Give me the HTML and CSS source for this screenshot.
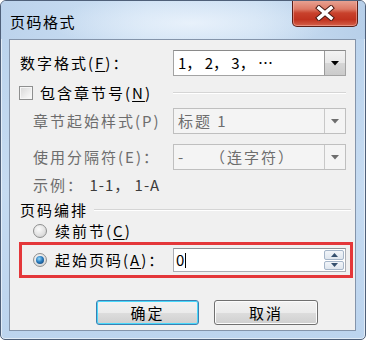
FILE: index.html
```html
<!DOCTYPE html>
<html lang="zh-CN">
<head>
  <meta charset="UTF-8">
  <title>页码格式</title>
  <link rel="stylesheet" href="styles.css">
</head>
<body>

  <div class="window">
    <div class="titlebar">
      <span class="title">页码格式</span>
      <button class="close">
        <svg width="22" height="16" viewBox="0 0 22 16">
          <path d="M5 3 L17 13 M17 3 L5 13" stroke="#4a1a14" stroke-width="5.5" stroke-linecap="square"/>
          <path d="M5 3 L17 13 M17 3 L5 13" stroke="#fff" stroke-width="3.5" stroke-linecap="square"/>
        </svg>
      </button>
    </div>

    <div class="client">
      <div class="row">
        <label class="label">数字格式(<u>F</u>)：</label>
        <div class="combo">
          <span class="combo-text num">1，&nbsp;2，&nbsp;3，&nbsp;…</span>
          <span class="drop">
            <svg width="8" height="5" viewBox="0 0 8 5"><path d="M0 0 H8 L4 4.5 Z" fill="#000"/></svg>
          </span>
        </div>
      </div>

      <div class="row check-row">
        <label class="label"><span class="checkbox"></span>包含章节号(<u>N</u>)</label>
        <span class="rule"></span>
      </div>

      <div class="row row-3">
        <label class="label sub disabled">章节起始样式(P)</label>
        <div class="combo off">
          <span class="combo-text">标题 1</span>
          <span class="drop">
            <svg width="8" height="5" viewBox="0 0 8 5"><path d="M0 0 H8 L4 4.5 Z" fill="#6d6d6d"/></svg>
          </span>
        </div>
      </div>

      <div class="row row-4">
        <label class="label sub disabled">使用分隔符(E)：</label>
        <div class="combo off">
          <span class="combo-text"><span class="dash">-</span>（连字符）</span>
          <span class="drop">
            <svg width="8" height="5" viewBox="0 0 8 5"><path d="M0 0 H8 L4 4.5 Z" fill="#6d6d6d"/></svg>
          </span>
        </div>
      </div>

      <div class="row text-row">
        <span class="sub disabled">示例：&nbsp;<span class="sample">1-1，&nbsp;1-A</span></span>
      </div>

      <div class="row group-row">
        <span>页码编排</span>
        <span class="rule grow"></span>
      </div>

      <div class="row radio-row">
        <span class="radio"></span>
        <span class="radio-text">续前节(<u>C</u>)</span>
      </div>

      <div class="highlight">
        <div class="radio-cell">
          <span class="radio on"></span>
          <span class="radio-text">起始页码(<u>A</u>)：</span>
        </div>
        <div class="spin">
          <span class="spin-text">0<span class="caret"></span></span>
          <span class="spin-btns">
            <span class="spin-btn"><svg width="7" height="4" viewBox="0 0 7 4"><path d="M0 4 H7 L3.5 0 Z" fill="#35506e"/></svg></span>
            <span class="spin-btn"><svg width="7" height="4" viewBox="0 0 7 4"><path d="M0 0 H7 L3.5 4 Z" fill="#35506e"/></svg></span>
          </span>
        </div>
      </div>

      <div class="buttons">
        <button class="btn default">确定</button>
        <button class="btn">取消</button>
      </div>
    </div>
  </div>

</body>
</html>
```

FILE: styles.css
```css
body {
  margin: 0;
  background: #fff;
}
.window {
  width: 366px;
  height: 340px;
  box-sizing: border-box;
  border: 1px solid #4f6079;
  border-radius: 6px 6px 5px 5px;
  background: linear-gradient(180deg, #b9d2ec 0%, #c6dbf1 55%, #bcd4ee 100%);
  box-shadow: inset 0 0 0 1px rgba(255, 255, 255, 0.55);
  font-family: "Noto Sans CJK SC", sans-serif;
  overflow: hidden;
}
.titlebar {
  height: 38px;
  display: flex;
  background:
    radial-gradient(ellipse 140px 30px at 190px 22px, rgba(235, 243, 252, 0.9), rgba(235, 243, 252, 0)),
    linear-gradient(90deg, #bcd3ec 0%, #cde0f3 40%, #cadef2 70%, #b7cfe9 100%);
}
.title {
  padding: 11px 0 0 9px;
  font-size: 15px;
  letter-spacing: 1.5px;
  line-height: 20px;
  color: #000;
}
.close {
  margin: -1px 7px 0 auto;
  width: 66px;
  height: 27px;
  padding: 0;
  border: 1px solid #5d1e16;
  border-top: none;
  border-radius: 0 0 5px 5px;
  background: linear-gradient(180deg, #e9a697 0%, #dd7a66 35%, #c8412c 50%, #c0321f 75%, #d4614a 100%);
  box-shadow: inset 0 0 0 1px rgba(255, 200, 190, 0.45);
  display: flex;
  align-items: center;
  justify-content: center;
}
.client {
  margin: 0 9px 0 8px;
  height: 292px;
  box-sizing: border-box;
  border: 1px solid #8494aa;
  background: #f0f0f0;
  padding: 10px 9px 0 10px;
  display: flex;
  flex-direction: column;
  font-size: 15px;
  letter-spacing: 2px;
  line-height: 20px;
  color: #000;
}
.row {
  display: flex;
  align-items: center;
  height: 26px;
  flex: none;
}
.label {
  width: 153px;
  flex: none;
  white-space: nowrap;
  display: flex;
  align-items: center;
}
.sub {
  padding-left: 13px;
  box-sizing: border-box;
}
.disabled {
  color: #6d6d6d;
}
.combo {
  width: 173px;
  height: 26px;
  box-sizing: border-box;
  border: 1px solid #a3a3a3;
  border-top-color: #8a8a8a;
  background: #fff;
  display: flex;
  align-items: center;
  flex: none;
}
.combo-text {
  flex: 1;
  padding-left: 4px;
  white-space: nowrap;
}
.num {
  letter-spacing: 0;
}
.drop {
  width: 21px;
  height: 24px;
  box-sizing: border-box;
  border-left: 1px solid #9a9a9a;
  background: linear-gradient(180deg, #f3f3f3 0%, #e8e8e8 50%, #d6d6d6 51%, #cbcbcb 100%);
  display: flex;
  align-items: center;
  justify-content: center;
}
.combo.off {
  border-color: #bfbfbf;
  background: #f4f4f4;
  color: #6d6d6d;
}
.combo.off .drop {
  background: #f4f4f4;
  border-left-color: #c8c8c8;
}
.dash {
  display: inline-block;
  width: 32px;
}
.check-row {
  height: 24px;
  margin-top: 5px;
}
.checkbox {
  width: 14px;
  height: 14px;
  box-sizing: border-box;
  margin: 0 7px 0 -1px;
  border: 1px solid #8e8f8f;
  background: linear-gradient(135deg, #d6d6d6 0%, #f2f2f2 70%, #fbfbfb 100%);
  box-shadow: inset 0 0 0 1px #f6f6f6;
}
.rule {
  width: 177px;
  height: 1px;
  background: #d5d5d5;
  border-bottom: 1px solid #fff;
}
.rule.grow {
  width: auto;
  flex: 1;
  margin: 0 -5px 0 6px;
}
.row-3 {
  margin-top: 3px;
}
.row-4 {
  margin-top: 10px;
}
.text-row {
  height: 20px;
  margin-top: 5px;
}
.sample {
  color: #3c3c3c;
  letter-spacing: 1px;
}
.group-row {
  height: 20px;
  margin-top: 5px;
}
.radio-row {
  height: 18px;
  margin-top: 2px;
  padding-left: 13px;
}
.radio {
  width: 14px;
  height: 14px;
  box-sizing: border-box;
  border-radius: 50%;
  border: 1px solid #8e8f8f;
  background: radial-gradient(circle at 40% 35%, #fbfbfb 0%, #e2e2e2 55%, #c8c8c8 100%);
  flex: none;
  position: relative;
}
.radio.on::after {
  content: "";
  position: absolute;
  left: 2px;
  top: 2px;
  width: 8px;
  height: 8px;
  border-radius: 50%;
  background: radial-gradient(circle at 40% 35%, #9bdcf9 0%, #2a7dc0 45%, #123763 100%);
}
.radio-text {
  margin-left: 8px;
  white-space: nowrap;
}
.highlight {
  margin: 2px -7px 0 -1px;
  height: 36px;
  box-sizing: border-box;
  border: 3px solid #e4373a;
  padding: 3px 4px 3px 11px;
  display: flex;
  align-items: center;
  flex: none;
}
.radio-cell {
  width: 140px;
  display: flex;
  align-items: center;
  flex: none;
}
.spin {
  width: 173px;
  height: 24px;
  box-sizing: border-box;
  border: 1px solid #abadb3;
  border-top-color: #8f9196;
  background: #fff;
  display: flex;
  align-items: center;
}
.spin-text {
  flex: 1;
  padding-left: 2px;
  display: flex;
  align-items: center;
}
.caret {
  width: 1px;
  height: 15px;
  background: #000;
  margin-left: -1px;
}
.spin-btns {
  width: 20px;
  height: 20px;
  margin-right: 1px;
  display: flex;
  flex-direction: column;
  gap: 1px;
}
.spin-btn {
  flex: 1;
  box-sizing: border-box;
  border: 1px solid #a6b6c9;
  border-radius: 2px;
  background: linear-gradient(180deg, #f2f5f9 0%, #dfe6ee 100%);
  display: flex;
  align-items: center;
  justify-content: center;
}
.buttons {
  display: flex;
  gap: 15px;
  margin-top: 22px;
  padding-left: 76px;
}
.btn {
  width: 104px;
  height: 25px;
  box-sizing: border-box;
  border: 1px solid #707070;
  border-radius: 3px;
  background: linear-gradient(180deg, #f2f2f2 0%, #ebebeb 50%, #dddddd 51%, #cfcfcf 100%);
  box-shadow: inset 0 0 0 1px #fcfcfc;
  font-family: "Noto Sans CJK SC", sans-serif;
  font-size: 15px;
  letter-spacing: 2px;
  line-height: 20px;
  color: #000;
  padding: 0;
}
.btn.default {
  width: 103px;
  border-color: #3c7fb1;
  box-shadow: inset 0 0 0 1px #48d8fb;
}
u {
  text-underline-offset: 2px;
}
```
